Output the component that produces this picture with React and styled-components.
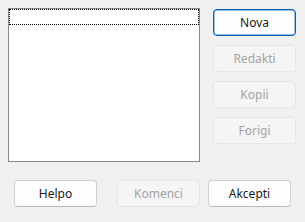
import React from 'react';
import styled, { createGlobalStyle } from 'styled-components';

const GlobalStyle = createGlobalStyle`
  html, body {
    margin: 0;
    padding: 0;
    background: #f0f0f0;
  }
  body {
    font-family: "Noto Sans", "Open Sans", "Liberation Sans", sans-serif;
    font-size: 12px;
  }
`;

const Dialog = styled.div`
  width: 305px;
  height: 222px;
  box-sizing: border-box;
  padding: 8px 0 0 8px;
  background: #f0f0f0;
`;

const TopRow = styled.div`
  display: flex;
  gap: 13px;
`;

const ListBox = styled.div`
  width: 192px;
  height: 154px;
  box-sizing: border-box;
  border: 1px solid #828790;
  background: #ffffff;
`;

const FocusRow = styled.div`
  height: 16px;
  box-sizing: border-box;
  border: 1px dotted #000;
`;

const SideButtons = styled.div`
  display: flex;
  flex-direction: column;
  gap: 9px;
  padding-top: 1px;
`;

const Button = styled.button`
  width: 83px;
  height: 27px;
  box-sizing: border-box;
  padding: 0 0 1px;
  border-radius: 4px;
  font-family: "Noto Sans", "Open Sans", "Liberation Sans", sans-serif;
  font-size: 12px;
  color: ${p => (p.disabled ? '#a3a3a3' : '#1a1a1a')};
  background: ${p => (p.disabled ? '#f5f5f5' : '#fdfdfd')};
  border: 1px solid ${p => (p.$focused ? '#005fb8' : p.disabled ? '#e6e6e6' : '#d0d0d0')};
  border-bottom-color: ${p => (p.$focused ? '#005fb8' : p.disabled ? '#e6e6e6' : '#b8b8b8')};
  box-shadow: ${p => (p.$focused ? 'inset 0 0 0 0.5px #3d82c8' : 'none')};
`;

const BottomRow = styled.div`
  display: flex;
  margin-top: 18px;
  padding-left: 6px;
`;

const Spacer = styled.div`
  width: ${p => p.$w}px;
`;

export default function App() {
  return (
    <>
      <GlobalStyle />
      <Dialog>
        <TopRow>
          <ListBox>
            <FocusRow />
          </ListBox>
          <SideButtons>
            <Button $focused>Nova</Button>
            <Button disabled>Redakti</Button>
            <Button disabled>Kopii</Button>
            <Button disabled>Forigi</Button>
          </SideButtons>
        </TopRow>
        <BottomRow>
          <Button>Helpo</Button>
          <Spacer $w={20} />
          <Button disabled>Komenci</Button>
          <Spacer $w={8} />
          <Button>Akcepti</Button>
        </BottomRow>
      </Dialog>
    </>
  );
}
